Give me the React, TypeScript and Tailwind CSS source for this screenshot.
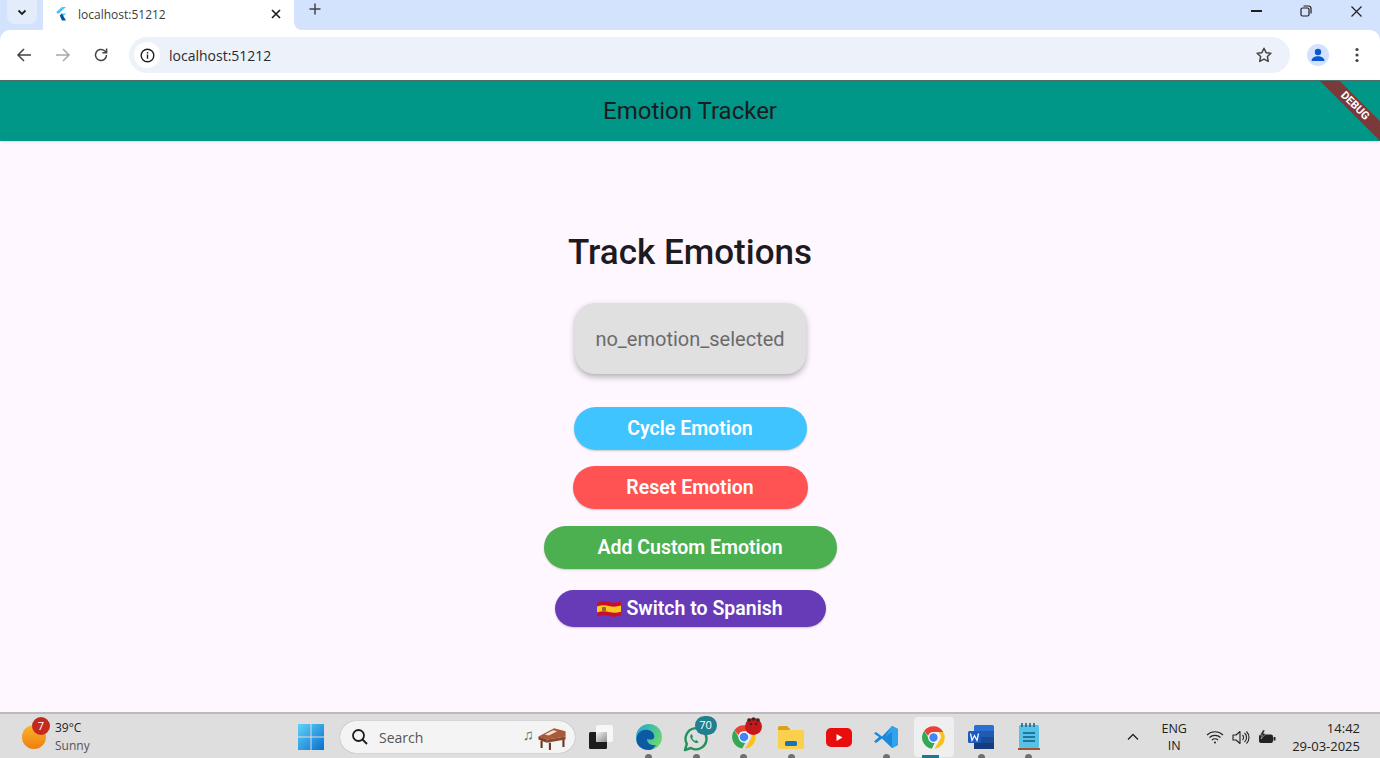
const segoe = { fontFamily: '"Open Sans", "Noto Sans", sans-serif' };

function ChromeLogo({ size = 24 }: { size?: number }) {
  return (
    <svg width={size} height={size} viewBox="0 0 48 48">
      <path d="M24 4a20 20 0 0 1 17.3 10H24a10 10 0 0 0-9.6 7.2L7.6 12A20 20 0 0 1 24 4z" fill="#ea4335" />
      <path d="M41.3 14A20 20 0 0 1 26 43.9L34.6 29A10 10 0 0 0 32.8 14z" fill="#fbc116" />
      <path d="M7.6 12l8.9 15.4A10 10 0 0 0 26 33.8L21 43.8A20 20 0 0 1 7.6 12z" fill="#34a853" />
      <circle cx="24" cy="24" r="9.5" fill="#fff" />
      <circle cx="24" cy="24" r="7.5" fill="#4285f4" />
    </svg>
  );
}

function TaskIcon({ children, dot, active }: { children: React.ReactNode; dot?: boolean; active?: boolean }) {
  return (
    <div className="relative flex h-[42px] w-[47.5px] shrink-0 items-center justify-center">
      {active && <div className="absolute left-[4px] top-[1px] h-[40px] w-[40px] rounded-[4px] bg-[#efefef]" />}
      <div className="relative flex items-center justify-center">{children}</div>
      {dot && <div className="absolute bottom-0 left-[20.5px] h-[4px] w-[7px] rounded-t-sm bg-[#6f6f6f]" />}
      {active && <div className="absolute bottom-0 left-[12.5px] h-[3px] w-[17px] bg-[#1c7a8c]" />}
    </div>
  );
}

function BrowserChrome() {
  return (
    <div className="shrink-0 bg-[#d3e3fd]" style={segoe}>
      <div className="flex h-[30px] items-stretch">
        <div className="ml-[7px] h-[24px] w-[30px] self-start rounded-b-lg bg-[#e3ecfb] flex items-center justify-center">
          <svg width="12" height="12" viewBox="0 0 12 12" fill="none" stroke="#1f1f1f" strokeWidth="1.8">
            <path d="M2.5 4.5 6 8l3.5-3.5" />
          </svg>
        </div>
        <div className="ml-[6px] flex w-[251px] items-center rounded-tr-none bg-white pl-[12px]">
          <svg width="11" height="14" viewBox="0 0 11 14" className="mb-[3px]">
            <path d="M7 0h4L3.2 7 1.2 5z" fill="#47c5fb" />
            <path d="M7 6.4h4L6.8 10.6 4.8 8.6z" fill="#47c5fb" />
            <path d="M4.8 8.6l2-2 4.2 6.8H7z" fill="#00569e" />
          </svg>
          <span className="ml-[12px] text-[12px] text-[#3c3c3c]">localhost:51212</span>
          <svg width="12" height="12" viewBox="0 0 12 12" className="ml-auto mr-[12px] mb-[2px]" stroke="#1f1f1f" strokeWidth="1.7">
            <path d="M2 2l8 8M10 2l-8 8" />
          </svg>
        </div>
        <div className="w-[8px] bg-white">
          <div className="h-full rounded-bl-[8px] bg-[#d3e3fd]" />
        </div>
        <svg width="12" height="12" viewBox="0 0 12 12" className="ml-[7px] mt-[3px]" stroke="#444" strokeWidth="1.5">
          <path d="M6 0.5v11M0.5 6h11" />
        </svg>
        <div className="ml-auto mr-[17px] flex items-center gap-[38px] pb-[8px]">
          <div className="h-[2px] w-[11px] bg-[#1f1f1f]" />
          <svg width="12" height="12" viewBox="0 0 12 12" fill="none" stroke="#1f1f1f" strokeWidth="1.2">
            <rect x="1" y="3" width="8" height="8" rx="1.5" />
            <path d="M3.5 1h5a2.5 2.5 0 0 1 2.5 2.5v5" />
          </svg>
          <svg width="13" height="13" viewBox="0 0 13 13" stroke="#1f1f1f" strokeWidth="1.2">
            <path d="M1.5 1.5l10 10M11.5 1.5l-10 10" />
          </svg>
        </div>
      </div>
      <div className="flex h-[50px] items-center rounded-t-[10px] bg-white">
        <svg width="16" height="16" viewBox="0 0 16 16" fill="none" stroke="#444" strokeWidth="1.5" className="ml-[16px]">
          <path d="M15 8H2M8 2 2 8l6 6" />
        </svg>
        <svg width="16" height="16" viewBox="0 0 16 16" fill="none" stroke="#a8a8a8" strokeWidth="1.5" className="ml-[23px]">
          <path d="M1 8h13M8 2l6 6-6 6" />
        </svg>
        <svg width="16" height="16" viewBox="0 0 16 16" fill="none" stroke="#444" strokeWidth="1.5" className="ml-[22px]">
          <path d="M13.5 8A5.5 5.5 0 1 1 11.6 3.8L13.5 5.5" />
          <path d="M13.6 1.5v4.2H9.4" />
        </svg>
        <div className="ml-[20px] flex h-[36px] w-[1161px] items-center rounded-full bg-[#edf2fa]">
          <div className="ml-[5px] flex h-[26px] w-[26px] items-center justify-center rounded-full bg-white">
            <svg width="15" height="15" viewBox="0 0 15 15" fill="none" stroke="#1f1f1f" strokeWidth="1.4">
              <circle cx="7.5" cy="7.5" r="6.3" />
              <path d="M7.5 6.6v4.2M7.5 4v1.6" />
            </svg>
          </div>
          <span className="ml-[9px] text-[14px] text-[#2a2a2a]">localhost:51212</span>
          <svg width="18" height="18" viewBox="0 0 24 24" fill="none" stroke="#444" strokeWidth="2" className="ml-auto mr-[17px]">
            <path d="M12 3l2.8 5.9 6.4.8-4.7 4.4 1.2 6.4-5.7-3.1-5.7 3.1 1.2-6.4-4.7-4.4 6.4-.8z" strokeLinejoin="round" />
          </svg>
        </div>
        <div className="ml-[17px] flex h-[22px] w-[22px] items-center justify-center rounded-full bg-[#d3e3fd]">
          <svg width="16" height="16" viewBox="0 0 16 16" fill="#0b57d0">
            <circle cx="8" cy="5" r="3.2" />
            <path d="M1.5 14c0-3 3-4.8 6.5-4.8s6.5 1.8 6.5 4.8z" />
          </svg>
        </div>
        <svg width="4" height="16" viewBox="0 0 4 16" fill="#444" className="ml-[26px]">
          <circle cx="2" cy="2.5" r="1.6" />
          <circle cx="2" cy="8" r="1.6" />
          <circle cx="2" cy="13.5" r="1.6" />
        </svg>
      </div>
    </div>
  );
}

function AppBar() {
  return (
    <div className="relative flex h-[61px] shrink-0 items-center justify-center overflow-hidden border-t border-[#4d6f6b] bg-[#009688] shadow-sm">
      <span className="text-[24px] text-[#1d1b20]">Emotion Tracker</span>
      <div className="absolute left-[1295px] top-[18px] flex h-[13.5px] w-[120px] rotate-45 items-center justify-center bg-[#7b3a3a]">
        <span className="text-[11px] font-bold leading-none text-white">DEBUG</span>
      </div>
    </div>
  );
}

function Pill({ className, children }: { className: string; children: React.ReactNode }) {
  return (
    <button className={`flex items-center justify-center rounded-full text-[19.5px] font-semibold text-white shadow-[0_1px_2px_rgba(0,0,0,0.2)] ${className}`}>
      {children}
    </button>
  );
}

function SpainFlag() {
  return (
    <svg width="24" height="18" viewBox="0 0 24 18" className="mr-[5px]">
      <path d="M0 2.5 Q6 0.5 12 2 T24 1.5V15.5 Q18 17.5 12 16 T0 16.5z" fill="#c8102e" />
      <path d="M0 6.5 Q6 4.5 12 6 T24 5.5V11.8 Q18 13.5 12 12 T0 12.5z" fill="#f9c623" />
      <rect x="5" y="7" width="4" height="4.5" rx="1" fill="#a5642a" />
    </svg>
  );
}

function Main() {
  return (
    <div className="flex flex-1 flex-col items-center bg-[#fef7ff] pt-[90px]">
      <h1 className="h-[42px] text-[35px] font-medium leading-[43px] text-[#1d1b20]">Track Emotions</h1>
      <div className="mt-[30px] flex h-[71px] w-[231px] items-center justify-center rounded-[20px] bg-[#e0e0e0] text-[20px] text-[#6b6b6b] shadow-[0_3px_6px_rgba(0,0,0,0.3)]">
        no_emotion_selected
      </div>
      <Pill className="mt-[33px] h-[43px] w-[233px] bg-[#40c4ff]">Cycle Emotion</Pill>
      <Pill className="mt-[16px] h-[43px] w-[235px] bg-[#ff5252]">Reset Emotion</Pill>
      <Pill className="mt-[17px] h-[43px] w-[293px] bg-[#4caf50]">Add Custom Emotion</Pill>
      <Pill className="mt-[21px] h-[37px] w-[271px] bg-[#673ab7]">
        <SpainFlag />
        Switch to Spanish
      </Pill>
    </div>
  );
}

function Taskbar() {
  return (
    <div className="flex h-[46px] shrink-0 items-center border-t-2 border-[#bdb9bd] bg-[#dedede] pt-[2px]" style={segoe}>
      <div className="relative ml-[22px] h-[24px] w-[24px] shrink-0 rounded-full bg-gradient-to-b from-[#f9b52c] to-[#ef7d0c]">
        <div className="absolute -top-[8px] left-[10px] flex h-[18px] w-[18px] items-center justify-center rounded-full bg-[#c4291f] text-[11px] text-white">7</div>
      </div>
      <div className="ml-[9px] w-[232.5px] shrink-0 text-[12px] leading-[18px]">
        <div className="text-[#222]">39°C</div>
        <div className="text-[#555]">Sunny</div>
      </div>
      <TaskIcon>
        <svg width="26" height="26" viewBox="0 0 26 26">
          <defs>
            <linearGradient id="winlogo" x1="0" y1="0" x2="1" y2="1">
              <stop offset="0" stopColor="#5fd3f5" />
              <stop offset="1" stopColor="#0a6fd0" />
            </linearGradient>
          </defs>
          <path d="M0 0h12.5v12.5H0zM13.5 0H26v12.5H13.5zM0 13.5h12.5V26H0zM13.5 13.5H26V26H13.5z" fill="url(#winlogo)" />
        </svg>
      </TaskIcon>
      <div className="ml-[5px] flex h-[32px] w-[235px] shrink-0 items-center rounded-full bg-[#f4f4f4] shadow-[0_0_1px_rgba(0,0,0,0.4)]">
        <svg width="18" height="18" viewBox="0 0 18 18" fill="none" stroke="#1c1c1c" strokeWidth="1.8" className="ml-[11px]">
          <circle cx="7.5" cy="7.5" r="5.5" />
          <path d="M11.5 11.5 16 16" />
        </svg>
        <span className="ml-[10px] text-[14px] text-[#555]">Search</span>
        <span className="ml-auto mb-[6px] text-[15px] leading-none text-[#666]">♫</span>
        <svg width="34" height="25" viewBox="0 0 30 24" className="ml-[1px] mr-[6px]">
          <path d="M2 11 17 3l11 3v5L10 14z" fill="#a85a3a" />
          <path d="M2 11l8 3v3l-8-3z" fill="#7d3d26" />
          <path d="M10 14l18-3v3l-18 3z" fill="#8e4a2f" />
          <path d="M5 15v7M13 17v7M26 14v7" stroke="#6b3420" strokeWidth="2" />
          <path d="M8 9l8-4 4 1-8 4z" fill="#f1e2d4" />
        </svg>
      </div>
      <div className="ml-[2.25px] flex">
        <TaskIcon>
          <svg width="26" height="26" viewBox="0 0 26 26" className="-ml-[1px]">
            <defs>
              <linearGradient id="taskview" x1="0" y1="0" x2="1" y2="1">
                <stop offset="0" stopColor="#f2f2f2" />
                <stop offset="1" stopColor="#8f8f8f" />
              </linearGradient>
            </defs>
            <rect x="8" y="1" width="17" height="17" rx="2" fill="#f7f7f7" />
            <rect x="1" y="8" width="18" height="17" rx="1.5" fill="#1d1d1d" />
            <rect x="8" y="8" width="11" height="10" fill="url(#taskview)" />
          </svg>
        </TaskIcon>
        <TaskIcon dot>
          <svg width="26" height="26" viewBox="0 0 26 26">
            <defs>
              <linearGradient id="edgetop" x1="0" y1="0" x2="1" y2="0.6">
                <stop offset="0" stopColor="#1fa4d8" />
                <stop offset="1" stopColor="#6bd86e" />
              </linearGradient>
            </defs>
            <circle cx="13" cy="13" r="13" fill="url(#edgetop)" />
            <path d="M0.4 15C1 8 7 5 12 6c5 1 7 5 6 8-1 1.8-4 2-7 1 0 4 4 7 9 6-2 3-4.5 5-7 5C5 26 0 21 0.4 15z" fill="#0c59a4" />
          </svg>
        </TaskIcon>
        <TaskIcon dot>
          <div className="relative">
            <svg width="26" height="26" viewBox="0 0 26 26" fill="none" className="mt-[3px] -ml-[3px]">
              <path d="M3 24l1.8-6.2A10.5 10.5 0 1 1 9 22z" stroke="#25925c" strokeWidth="2.4" strokeLinejoin="round" />
              <path d="M9 8.5c-1.5 1.5-.8 4 1.5 6.3s4.8 3 6.300 1.500l-2.500-2.200-1.300.8c-1-.4-2.200-1.600-2.800-2.800l.8-1.300L9.800 8z" fill="#25925c" />
            </svg>
            <div className="absolute -top-[7px] left-[10px] flex h-[19px] w-[22px] items-center justify-center rounded-full bg-[#217f8e] text-[11px] text-white">70</div>
          </div>
        </TaskIcon>
        <TaskIcon dot>
          <div className="relative">
            <ChromeLogo size={28} />
            <div className="absolute -top-[5px] left-[15px] h-[17px] w-[17px] rounded-full bg-[#c6171c]" />
            <svg width="17" height="8" viewBox="0 0 17 8" className="absolute -top-[6px] left-[15px]" fill="#3d2420">
              <circle cx="4" cy="3" r="1.8" />
              <circle cx="8.5" cy="2" r="1.8" />
              <circle cx="13" cy="3" r="1.8" />
              <circle cx="6" cy="7" r="1.2" />
              <circle cx="11" cy="7" r="1.2" />
            </svg>
          </div>
        </TaskIcon>
        <TaskIcon dot>
          <svg width="26" height="24" viewBox="0 0 26 24">
            <path d="M0 3a2 2 0 0 1 2-2h7l2.5 2.5H12V7H0z" fill="#d9a11c" />
            <path d="M0 5h24a2 2 0 0 1 2 2v15a2 2 0 0 1-2 2H2a2 2 0 0 1-2-2z" fill="#fbd04c" />
            <rect x="7" y="16" width="12" height="5" rx="1.5" fill="#1476b8" />
          </svg>
        </TaskIcon>
        <TaskIcon>
          <svg width="26" height="19" viewBox="0 0 26 19">
            <rect width="26" height="19" rx="5" fill="#ea0d0d" />
            <path d="M10.5 6v7l6-3.5z" fill="#fff" />
          </svg>
        </TaskIcon>
        <TaskIcon dot>
          <svg width="26" height="26" viewBox="0 0 26 26">
            <path d="M1 9.5l2-1.5 6 4.500L19 2l6 3v16l-6 3L9 14.5 3 19l-2-1.500 5-4.500z" fill="#1d87d8" />
            <path d="M19 2l6 3v16l-6 3V8l-7 5z" fill="#2fa3ee" />
          </svg>
        </TaskIcon>
        <TaskIcon active>
          <ChromeLogo size={27} />
        </TaskIcon>
        <TaskIcon dot>
          <svg width="26" height="24" viewBox="0 0 26 24">
            <rect x="6" y="0" width="20" height="24" rx="1.5" fill="#2b6fd1" />
            <rect x="6" y="6" width="20" height="6" fill="#1f5bb5" />
            <rect x="6" y="12" width="20" height="6" fill="#1a4b99" />
            <rect x="6" y="18" width="20" height="6" fill="#163c80" />
            <rect x="0" y="6" width="13" height="12" rx="1.5" fill="#1c5ac0" />
            <path d="M2.5 8.5l1.5 7 2.5-5 2.5 5 1.5-7" fill="none" stroke="#fff" strokeWidth="1.2" />
          </svg>
        </TaskIcon>
        <TaskIcon dot>
          <svg width="22" height="28" viewBox="0 0 22 28">
            <rect x="1" y="2" width="20" height="23" rx="1.5" fill="#57c1e8" />
            <rect x="0" y="25" width="22" height="2" fill="#a5532a" />
            <path d="M4 0v4M8 0v4M12 0v4M16 0v4" stroke="#15607f" strokeWidth="1.5" />
            <path d="M5 10h12M5 14h12M5 18h12" stroke="#0c5d82" strokeWidth="1.3" />
          </svg>
        </TaskIcon>
      </div>
      <svg width="12" height="8" viewBox="0 0 12 8" fill="none" stroke="#222" strokeWidth="1.3" className="ml-[75px]">
        <path d="M1 6.5 6 1.5l5 5" />
      </svg>
      <div className="ml-[19px] w-[32px] text-center text-[12.5px] leading-[17px] text-[#222]">
        <div>ENG</div>
        <div>IN</div>
      </div>
      <svg width="18" height="14" viewBox="0 0 18 14" fill="none" stroke="#222" strokeWidth="1.2" className="ml-[16px]">
        <path d="M1 5a11.5 11.5 0 0 1 16 0M3.5 7.5a8 8 0 0 1 11 0M6 10a4.2 4.2 0 0 1 6 0" />
        <circle cx="9" cy="12.5" r="1" fill="#222" stroke="none" />
      </svg>
      <svg width="18" height="15" viewBox="0 0 18 15" fill="none" stroke="#222" strokeWidth="1.1" className="ml-[8px]">
        <path d="M1 5v5h3l4 3.5v-12L4 5z" strokeLinejoin="round" />
        <path d="M10.5 5a3.5 3.5 0 0 1 0 5M12.5 3a6 6 0 0 1 0 9M14.5 1.5a8.5 8.5 0 0 1 0 12" />
      </svg>
      <svg width="18" height="15" viewBox="0 0 18 15" className="ml-[8px]">
        <rect x="1" y="4.5" width="14" height="8.5" rx="2" fill="#222" />
        <rect x="15.5" y="7" width="2" height="3.5" fill="#222" />
        <path d="M5 0 2 5h2.5L3 9l5-5.5H5.500L7 0z" fill="#222" stroke="#dedede" strokeWidth="0.5" />
      </svg>
      <div className="ml-auto mr-[20px] text-right text-[13px] leading-[18px] text-[#222]">
        <div>14:42</div>
        <div>29-03-2025</div>
      </div>
    </div>
  );
}

export default function App() {
  return (
    <div className="flex h-[758px] w-[1380px] flex-col overflow-hidden font-[Roboto,sans-serif]">
      <BrowserChrome />
      <AppBar />
      <Main />
      <Taskbar />
    </div>
  );
}
